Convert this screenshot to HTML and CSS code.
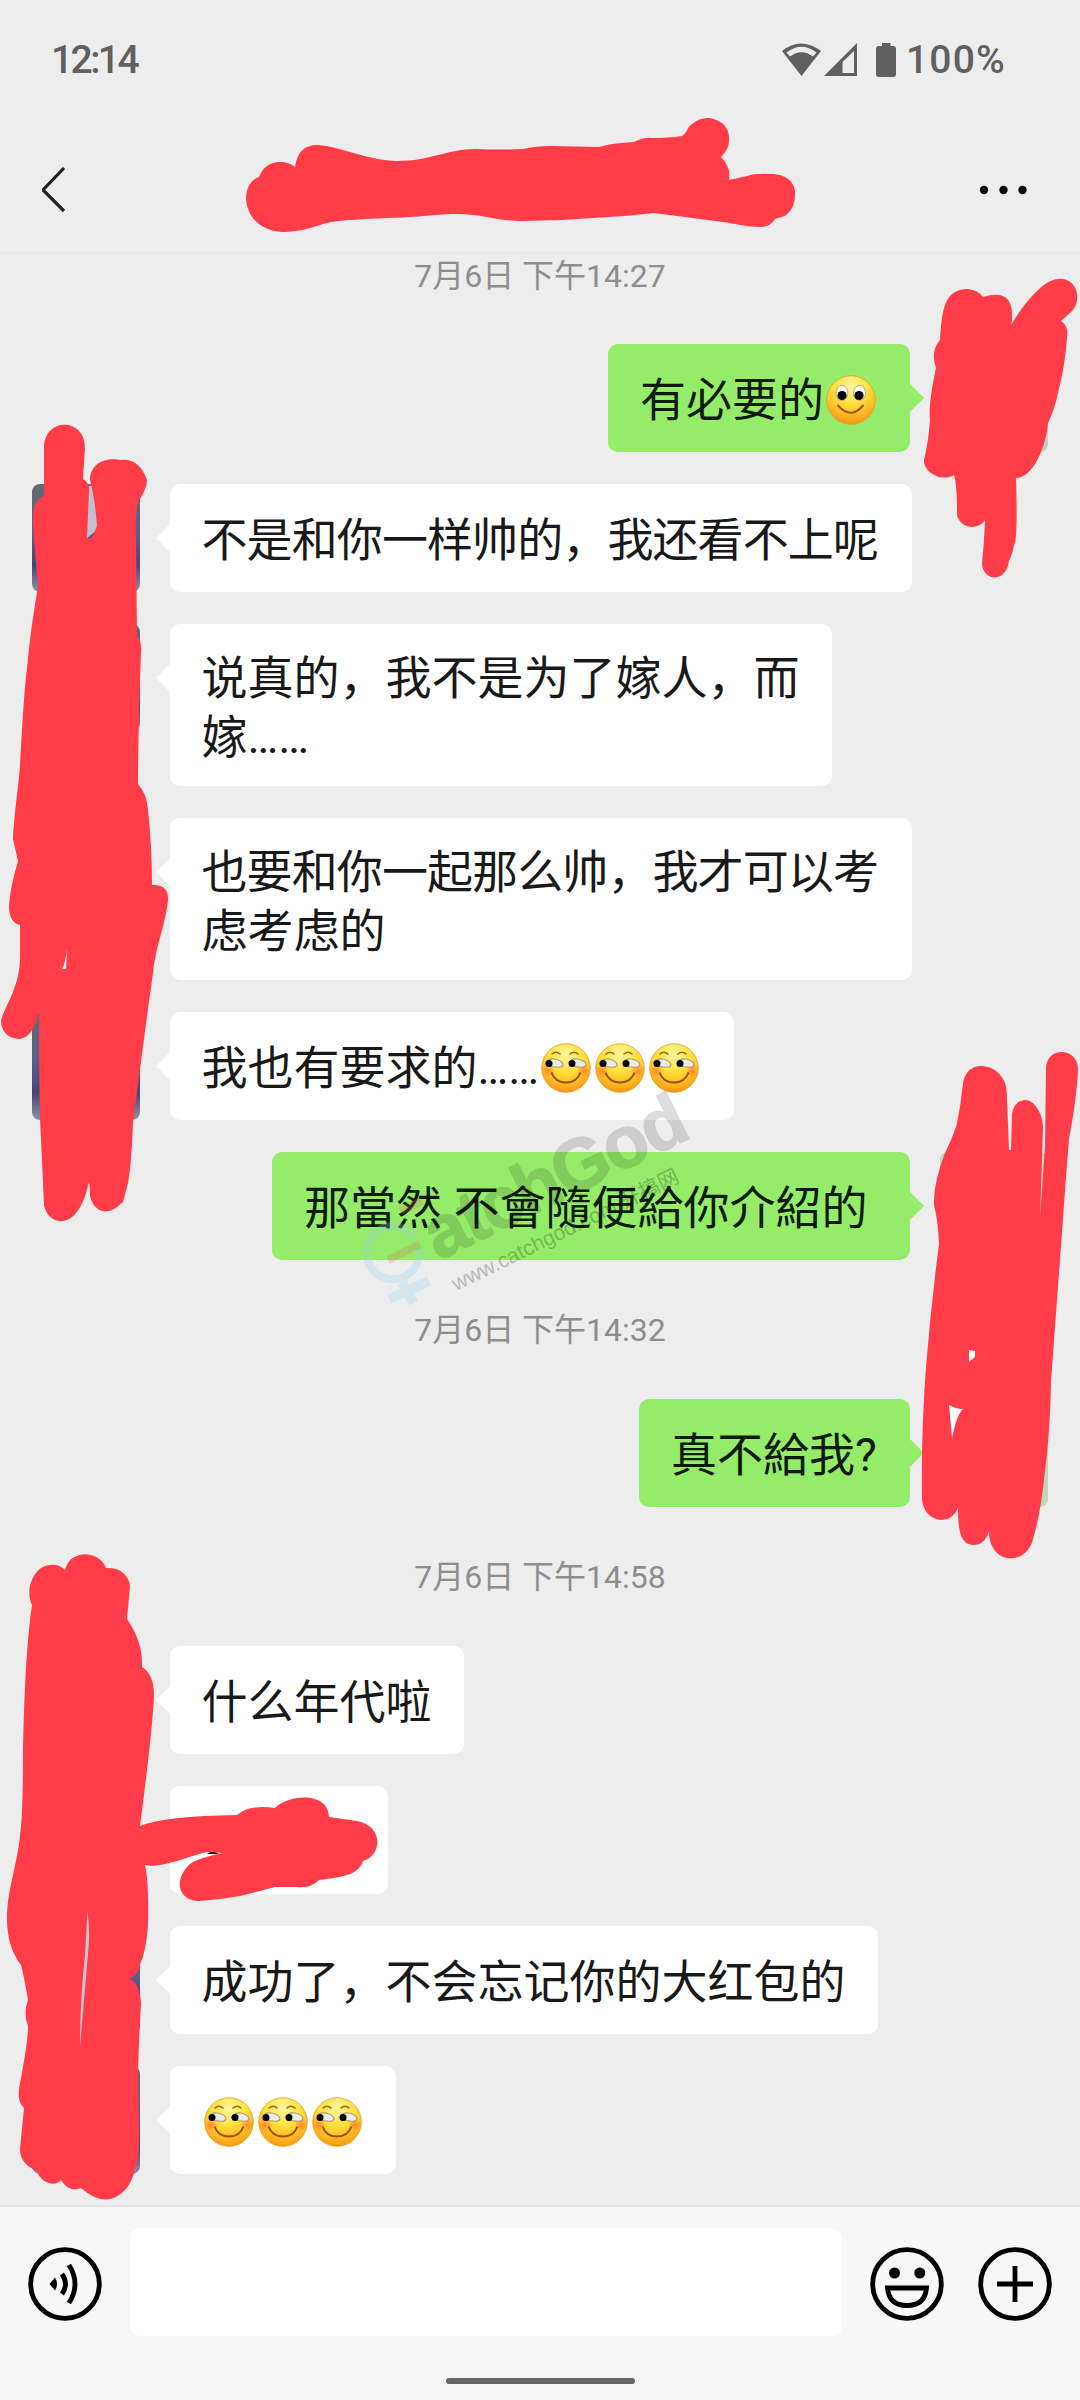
FILE: index.html
```html
<!DOCTYPE html>
<html lang="zh"><head><meta charset="utf-8"><title>Chat</title><link rel="stylesheet" href="styles.css"></head>
<body>
<svg class="defs" width="0" height="0">
<defs>
<radialGradient id="face" cx=".5" cy=".22" r=".8"><stop offset="0" stop-color="#fff7a0"/><stop offset=".45" stop-color="#ffe03a"/><stop offset=".85" stop-color="#fcab1c"/><stop offset="1" stop-color="#f39016"/></radialGradient>
<radialGradient id="blush"><stop offset="0" stop-color="#ff6a2a" stop-opacity=".7"/><stop offset="1" stop-color="#ff7a2a" stop-opacity="0"/></radialGradient>
<symbol id="smile" viewBox="0 0 50 50"><circle cx="25" cy="25" r="24.3" fill="url(#face)" stroke="#e99a25" stroke-width=".8"/><ellipse cx="16" cy="18" rx="6" ry="7.6" fill="#fff" stroke="#b9a878"/><ellipse cx="33.500" cy="18" rx="6" ry="7.600" fill="#fff" stroke="#b9a878"/><circle cx="16" cy="20.500" r="4.600" fill="#000"/><circle cx="33" cy="20.500" r="4.600" fill="#000"/><path d="M12 30.500Q25 45 37 30.500" fill="none" stroke="#a5560c" stroke-width="2" stroke-linecap="round"/></symbol>
<symbol id="smirk" viewBox="0 0 50 50"><circle cx="25" cy="25" r="24.3" fill="url(#face)" stroke="#e99a25" stroke-width=".8"/><circle cx="7" cy="28" r="7" fill="url(#blush)"/><circle cx="43" cy="28" r="7" fill="url(#blush)"/><path d="M11 11Q15 7.500 19 11M29 11Q33 7.500 37 11" fill="none" stroke="#a5640c" stroke-width="1.600" stroke-linecap="round"/><path d="M5 20Q7 15 14 16Q22 18 22 22Q21 25 15 24Q7 24 5 20ZM28 20Q30 15 37 16Q45 18 45 22Q44 25 38 24Q30 24 28 20Z" fill="#ecece6" stroke="#a99c78" stroke-width="1.200"/><circle cx="8" cy="20.500" r="3.500"/><circle cx="31" cy="20.500" r="3.500"/><path d="M10.500 29.500Q14 39.500 25 39.500Q36 39.500 39.500 29.500" fill="none" stroke="#94540c" stroke-width="2"/></symbol>
</defs></svg>
<header class="top">
<div class="status"><span class="clock">12:14</span><div class="state">
<svg width="118" height="36" viewBox="778 40 118 36" fill="#606060"><path d="M779 50Q798 35 818 50L798.500 75Z"/><path d="M783.500 51.500Q798.500 40 813.500 51.500L810 55.500Q798.500 47 787 55.500Z" fill="#ededed"/><path fill-rule="evenodd" d="M821 75L854 42V75ZM839.500 61V72H851V50Z"/><path d="M879 45V42H887.500V45H890Q893 45 893 48V73Q893 76 890 76H876Q873 76 873 73V48Q873 45 876 45Z"/></svg>
<span class="battery">100%</span></div></div>
<nav class="nav"><svg width="24" height="46" viewBox="42 167 24 46"><path d="M64 168L43 190L64 211" fill="none" stroke="#222" stroke-width="3.200"/></svg><svg width="48" height="10" viewBox="979 185.500 48 10"><circle cx="984" cy="190.500" r="4.200"/><circle cx="1003.500" cy="190.500" r="4.200"/><circle cx="1022.500" cy="190.500" r="4.200"/></svg></nav>
</header>
<main class="chat">
<time class="time first">7月6日 下午14:27</time>
<div class="row sent"><p class="bubble w302">有必要的<svg class="emoji"><use href="#smile"/></svg></p><i class="avatar green"></i></div>
<div class="row"><i class="avatar"></i><p class="bubble w742 tight">不是和你一样帅的，我还看不上呢</p></div>
<div class="row tall"><i class="avatar"></i><p class="bubble w662">说真的，我不是为了嫁人，而<br>嫁……</p></div>
<div class="row tall"><i class="avatar"></i><p class="bubble w742"><span class="tight">也要和你一起那么帅，我才可以考</span><br>虑考虑的</p></div>
<div class="row"><i class="avatar"></i><p class="bubble w564">我也有要求的……<svg class="emoji"><use href="#smirk"/></svg><svg class="emoji"><use href="#smirk"/></svg><svg class="emoji"><use href="#smirk"/></svg></p></div>
<div class="row sent"><p class="bubble w638">那當然 不會隨便給你介紹的</p><i class="avatar green"></i></div>
<time class="time">7月6日 下午14:32</time>
<div class="row sent"><p class="bubble w271">真不給我?</p><i class="avatar green"></i></div>
<time class="time">7月6日 下午14:58</time>
<div class="row"><i class="avatar"></i><p class="bubble w294">什么年代啦</p></div>
<div class="row"><i class="avatar"></i><p class="bubble w218"></p></div>
<div class="row"><i class="avatar"></i><p class="bubble w708">成功了，不会忘记你的大红包的</p></div>
<div class="row"><i class="avatar"></i><p class="bubble w226"><svg class="emoji"><use href="#smirk"/></svg><svg class="emoji"><use href="#smirk"/></svg><svg class="emoji"><use href="#smirk"/></svg></p></div>
</main>
<footer class="composer">
<div class="tools">
<svg class="tool" viewBox="0 0 74 74"><circle cx="37" cy="37" r="34.300"/><path d="M34 27Q41 37 34 47M41 18Q53 37 41 56"/><path class="fill" d="M27 30.500L21.500 37L27 43.500Q31 37 27 30.500Z"/></svg>
<div class="input"></div>
<svg class="tool" viewBox="0 0 74 74"><circle cx="37" cy="37" r="34.300"/><circle class="fill" cx="24.500" cy="26" r="5.500"/><circle class="fill" cx="49.800" cy="26" r="5.500"/><path d="M17.500 41H56.500Q55 58.500 37 58.500Q19 58.500 17.500 41Z"/></svg>
<svg class="tool plus" viewBox="0 0 74 74"><circle cx="37" cy="37" r="34.300"/><path d="M19 37H55M37 19V55"/></svg>
</div>
<div class="home"></div>
</footer>
<svg class="overlay" width="1080" height="2400" viewBox="0 0 1080 2400">
<g class="mark">
<g class="ring"><path d="M415 1238A26.500 26.500 0 1 0 419 1248"/><path class="cross" d="M402 1282L414 1303M389 1299L429 1281"/></g>
<path class="bar" d="M388 1260L420 1244M400 1211L422 1201"/>
<text class="brand" transform="translate(438 1261) rotate(-26)" textLength="284">atchGod</text>
<text class="url" transform="translate(456 1291) rotate(-26)" textLength="250">www.catchgod.com 开搞网</text>
</g>
<path d="M87 486H97V530L87 538Z" fill="#c5bfd2"/>
<path d="M207 1854Q213 1849 219 1854Z"/>
<g class="scribble">
<path d="M295 167Q298 145 317 145C335 145 370 161 397 161C430 161 448 149 475 149Q505 150 523 149Q535 146 551 146L599 147Q612 143 634 142Q645 137 651 138Q670 138 682 136C688 132 687 127 692 124Q700 117 710 118C724 121 730 130 729 140C729 147 726 152 721 157Q731 167 729 180L747 176Q755 173 771 174C787 174 795 183 795 193C795 205 792 210 785 216L775 219Q770 227 761 227C748 227 737 224 723 222C700 219 677 216 654 213C635 215 615 217 592 218Q558 221 523 221C496 221 480 213 451 214C430 215 406 218 386 218C363 219 344 220 331 222C314 226 303 232 282 232C259 231 246 215 246 197Q247 181 259 177Q265 162 280 162Q289 162 295 167Z"/>
<path d="M940 340C942 310 944 289 968 289Q978 290 983 297Q1012 288 1012 315Q1013 324 1008 330Q1023 304 1037 291Q1051 277 1063 279C1078 281 1082 302 1071 312L1061 321Q1069 326 1067 338Q1065 366 1058 393Q1055 408 1048 423C1046 447 1033 478 1016 478Q1018 540 1014 545Q1013 553 1009 561C1006 584 982 581 982 563Q984 544 985 520C976 533 957 526 957 513Q957 484 954 475C941 483 923 471 924 460Q928 444 930 420Q928 405 936 368Q930 352 940 340Z"/>
<path d="M44 496V448C44 417 85 417 85 448L83 479Q90 483 89 491L87 538H92L97 526Q95 499 90 480C90 463 106 457 121 460Q139 458 147 480Q147 489 138 502Q135 518 136 536L137 636Q142 642 141 652Q138 718 138 784Q147 794 148 810Q152 848 152 885C165 884 169 892 168 901C164 930 156 945 153 973Q145 1030 133 1123Q131 1173 127 1187L123 1202Q118 1207 112 1210C98 1216 88 1202 90 1189L89 1182Q84 1204 76 1213C65 1227 47 1222 44 1205L40 1118Q39 1070 39 1011Q33 1039 18 1039Q2 1037 1 1021C4 1007 20 988 20 957V925C11 923 9 914 9 906Q10 888 18 861L13 839C14 815 20 774 20 764Q24 690 27 668Q31 625 38 587L33 525Q31 501 44 496Z"/>
<path d="M945 1153Q955 1132 957 1123Q961 1104 963 1083C966 1069 974 1066 982 1066Q997 1067 1004 1081Q1007 1085 1007 1100L1009 1150H1011L1012 1114Q1014 1101 1025 1100C1034 1100 1043 1113 1043 1128L1040 1219L1045 1146L1046 1069C1046 1046 1078 1047 1078 1069Q1077 1096 1069 1139Q1066 1175 1063 1219L1051 1381Q1050 1434 1045 1470Q1041 1513 1033 1539C1027 1566 989 1566 989 1531Q985 1545 973 1545C962 1544 958 1535 958 1508Q953 1520 941 1520C930 1519 922 1510 922 1498Q921 1433 926 1367Q931 1305 939 1244Q938 1220 934 1205Q933 1184 945 1153Z"/>
<path d="M32 1605C24 1589 35 1565 50 1565Q59 1564 65 1570C70 1549 99 1550 106 1568C120 1567 129 1575 130 1586L127 1619Q143 1642 142 1667Q154 1674 154 1696Q152 1735 140 1826Q165 1816 237 1815Q251 1804 275 1808C287 1795 328 1790 329 1817L357 1821C382 1825 384 1854 363 1861C359 1874 345 1877 319 1880Q310 1889 296 1887H275L240 1896Q217 1900 198 1901C178 1900 173 1880 190 1864Q198 1858 223 1853L207 1852C194 1854 163 1869 145 1865Q149 1882 148 1926Q146 1951 140 1965Q138 1976 129 1979Q140 1982 141 2004Q139 2036 138 2073L139 2138C140 2160 133 2182 125 2190Q106 2210 81 2188Q69 2193 61 2180C55 2188 40 2182 37 2171Q20 2164 20 2149L24 2108Q16 2101 20 2083Q28 2042 28 2026Q23 2013 28 2000Q24 1976 21 1965Q7 1947 7 1919C7 1889 17 1867 20 1835Q23 1816 23 1748Q25 1651 32 1605Z"/>
</g>
<g fill="#fff"><path d="M67 949L66 969H62Q65 965 67 949ZM969 1350L975 1351V1357L969 1362ZM949 1405Q956 1409 963 1409Q957 1414 952 1438Z"/></g>
<path d="M87.500 1911Q90 1930 88.500 1948L80 2047Q80 2000 85 1955Z" fill="#c6c4d2"/>
</svg>
</body></html>
```
FILE: styles.css
```css
* { box-sizing: border-box; }
body { margin: 0; width: 1080px; height: 2400px; display: flex; flex-direction: column; position: relative; overflow: hidden; background: #ededed; color: #191919; font-family: Roboto, "Noto Sans CJK SC", sans-serif; }
svg { display: block; flex: none; }
.defs { position: absolute; }
.top { height: 254px; border-bottom: 2px solid #e7e7e7; }
.status { height: 118px; padding: 0 75px 0 51px; display: flex; align-items: center; justify-content: space-between; color: #606060; font-size: 39px; font-weight: 500; }
.clock { letter-spacing: -2.6px; padding-top: 2px; }
.state { display: flex; align-items: center; gap: 7px; }
.battery { letter-spacing: 1.2px; margin-right: -1px; padding-top: 2px; }
.nav { height: 136px; padding: 8px 53px 0 42px; display: flex; align-items: center; justify-content: space-between; }
.chat { height: 1951px; flex: none; }
.time { display: flex; height: 139px; padding-bottom: 5px; align-items: center; justify-content: center; color: #8d8d8d; font-size: 32px; }
.time.first { height: 90px; padding-bottom: 52px; }
.row { display: flex; gap: 29.500px; height: 108px; margin: 0 32px 32px; }
.row.tall { height: 162px; }
.row.sent { justify-content: flex-end; gap: 30px; }
.row:has(+ .time) { margin-bottom: 0; }
.avatar { width: 108px; height: 108px; flex: none; border-radius: 8px; background: linear-gradient(#626b70, #5c5d8c 45%, #494575 75%, #8b91a8); }
.avatar.green { background: #c0d6bb; }
.bubble { position: relative; margin: 0; padding: 27px 0 0 32px; flex: none; border-radius: 10px; background: #fff; font-size: 46px; line-height: 59px; white-space: nowrap; }
.tall .bubble { padding-top: 25px; }
.sent .bubble { background: #95ec69; color: #0c1a08; }
.bubble::before { content: ""; position: absolute; top: 40px; left: -14px; border: solid transparent; border-width: 14px 14px 14px 0; border-right-color: #fff; }
.sent .bubble::before { left: auto; right: -14px; border-width: 14px 0 14px 14px; border-left-color: #95ec69; }
.tight { letter-spacing: -.9px; }
.w742 { width: 742px; }
.w708 { width: 708px; }
.w662 { width: 662px; }
.w638 { width: 638px; }
.w564 { width: 564px; }
.w302 { width: 302px; }
.w294 { width: 294px; }
.w271 { width: 271px; }
.w226 { width: 226px; }
.w218 { width: 218px; }
.emoji { display: inline-block; width: 50px; height: 50px; margin: 0 2px; vertical-align: -9px; }
.composer { flex: 1; background: #f7f7f7; border-top: 2px solid #e2e2e2; }
.tools { display: flex; align-items: center; height: 150px; padding: 0 28px; }
.tool { width: 74px; height: 74px; margin-top: 3px; fill: none; stroke: #000; stroke-width: 4.800; }
.tool .fill { fill: #000; stroke: none; }
.input { width: 712px; height: 108px; margin: 0 28px; border-radius: 10px; background: #fff; }
.plus { margin-left: 34px; }
.home { width: 189px; height: 6px; margin: 21px auto 0; border-radius: 3px; background: #666; }
.overlay { position: absolute; left: 0; top: 0; }
.ring { fill: none; stroke: #8fd0f0; stroke-width: 8; opacity: .27; }
.cross { stroke-width: 10; }
.bar { stroke: #e06060; stroke-width: 8; opacity: .22; }
.brand { font: bold 73px "Liberation Sans", sans-serif; fill: #000; stroke: #000; stroke-width: 1.500; opacity: .13; }
.url { font: 21px "Liberation Sans", "Noto Sans CJK SC", sans-serif; fill: #000; opacity: .22; }
.scribble { fill: #ff3c48; }
```
